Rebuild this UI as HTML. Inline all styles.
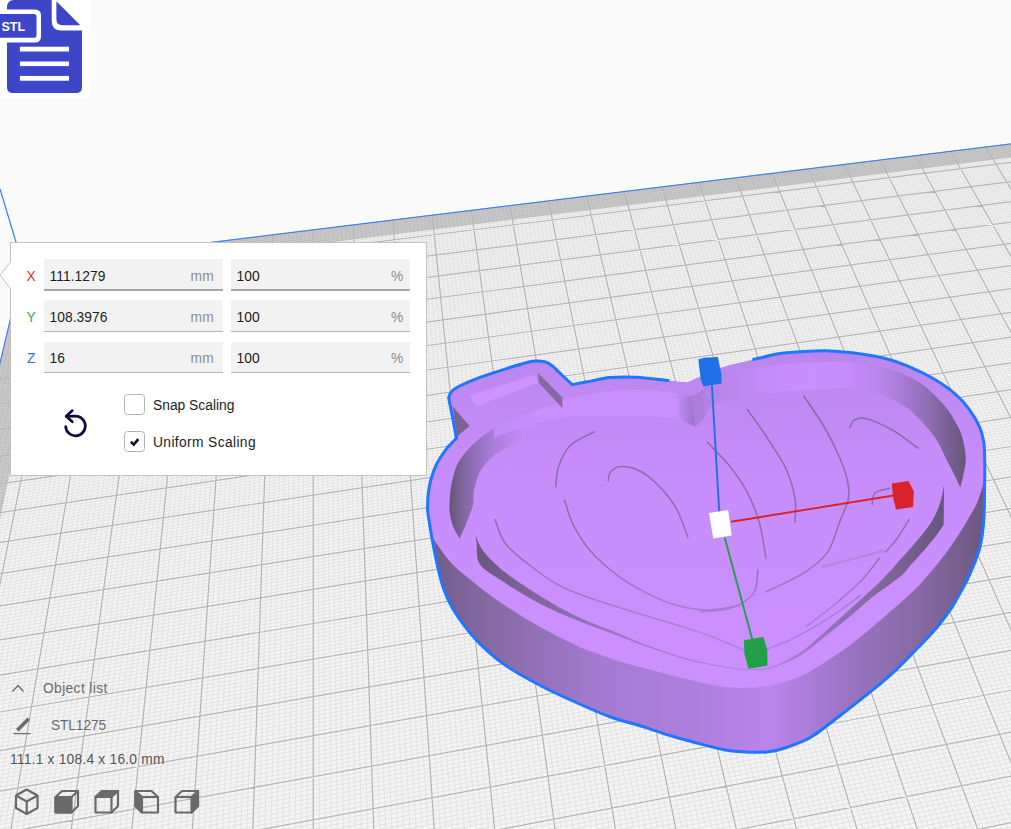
<!DOCTYPE html>
<html><head><meta charset="utf-8"><title>STL1275</title>
<style>
html,body{margin:0;padding:0}
body{width:1011px;height:829px;overflow:hidden;position:relative;background:#fafafa;font-family:"Liberation Sans",sans-serif}
.abs{position:absolute;left:0;top:0}
.t{position:absolute;white-space:nowrap;font-size:13.8px;line-height:16px;color:#1c1c1c;letter-spacing:0.37px}
.panel{position:absolute;left:10px;top:242px;width:415px;height:232px;background:#fff;border:1px solid #c2c2c2;box-sizing:content-box}
.f{position:absolute;width:179px;height:30px;background:#f2f2f2;border-bottom:1.5px solid #b4b4b4}
.f.h{border-bottom:2px solid #a6a6a6;height:30px}
.u{color:#8c8c8c}
.cb{position:absolute;left:124px;width:19px;height:19px;border:1.2px solid #b4b4b4;border-radius:3.5px;background:#fff}
.g{color:#6b6b6b}

</style></head><body>
<svg class="abs" width="1011" height="829" viewBox="0 0 1011 829">
<polygon points="23.1,265.6 1054.3,138.6 1512.2,817.0 -193.1,1179.1" fill="#f4f4f4"/>
<path d="M27.4,265.0L-185.5,1177.5M31.6,264.5L-177.9,1175.9M35.9,264.0L-170.3,1174.3M40.2,263.5L-162.7,1172.7M44.4,262.9L-155.1,1171.1M48.7,262.4L-147.6,1169.5M52.9,261.9L-140.0,1167.9M57.2,261.4L-132.5,1166.3M61.4,260.9L-125.0,1164.7M69.9,259.8L-110.0,1161.5M74.1,259.3L-102.5,1159.9M78.3,258.8L-95.0,1158.3M82.5,258.2L-87.5,1156.7M86.8,257.7L-80.1,1155.1M91.0,257.2L-72.6,1153.6M95.2,256.7L-65.2,1152.0M99.4,256.2L-57.8,1150.4M103.6,255.7L-50.3,1148.8M112.0,254.6L-35.6,1145.7M116.2,254.1L-28.2,1144.1M120.4,253.6L-20.8,1142.6M124.6,253.1L-13.5,1141.0M128.7,252.6L-6.1,1139.4M132.9,252.0L1.2,1137.9M137.1,251.5L8.5,1136.3M141.3,251.0L15.9,1134.8M145.4,250.5L23.2,1133.2M153.8,249.5L37.7,1130.1M157.9,249.0L45.0,1128.6M162.1,248.5L52.2,1127.0M166.2,247.9L59.5,1125.5M170.4,247.4L66.7,1124.0M174.5,246.9L74.0,1122.4M178.6,246.4L81.2,1120.9M182.8,245.9L88.4,1119.4M186.9,245.4L95.6,1117.8M195.2,244.4L109.9,1114.8M199.3,243.9L117.1,1113.3M203.4,243.4L124.2,1111.8M207.5,242.9L131.4,1110.2M211.6,242.4L138.5,1108.7M215.7,241.8L145.6,1107.2M219.8,241.3L152.7,1105.7M223.9,240.8L159.8,1104.2M228.0,240.3L166.9,1102.7M236.2,239.3L181.0,1099.7M240.3,238.8L188.1,1098.2M244.4,238.3L195.1,1096.7M248.4,237.8L202.2,1095.2M252.5,237.3L209.2,1093.7M256.6,236.8L216.2,1092.2M260.7,236.3L223.2,1090.7M264.7,235.8L230.2,1089.3M268.8,235.3L237.2,1087.8M276.9,234.3L251.1,1084.8M280.9,233.8L258.1,1083.3M285.0,233.3L265.0,1081.9M289.0,232.8L271.9,1080.4M293.1,232.3L278.9,1078.9M297.1,231.8L285.8,1077.5M301.1,231.3L292.7,1076.0M305.2,230.8L299.6,1074.5M309.2,230.3L306.5,1073.1M317.2,229.3L320.2,1070.1M321.3,228.8L327.0,1068.7M325.3,228.4L333.9,1067.2M329.3,227.9L340.7,1065.8M333.3,227.4L347.5,1064.3M337.3,226.9L354.3,1062.9M341.3,226.4L361.1,1061.5M345.3,225.9L367.9,1060.0M349.3,225.4L374.7,1058.6M357.3,224.4L388.3,1055.7M361.2,223.9L395.0,1054.3M365.2,223.4L401.8,1052.8M369.2,222.9L408.5,1051.4M373.2,222.5L415.2,1050.0M377.1,222.0L421.9,1048.5M381.1,221.5L428.6,1047.1M385.1,221.0L435.3,1045.7M389.0,220.5L442.0,1044.3M396.9,219.5L455.4,1041.4M400.9,219.0L462.0,1040.0M404.8,218.6L468.7,1038.6M408.8,218.1L475.3,1037.2M412.7,217.6L481.9,1035.8M416.6,217.1L488.5,1034.4M420.6,216.6L495.1,1033.0M424.5,216.1L501.7,1031.6M428.4,215.7L508.3,1030.2M436.3,214.7L521.5,1027.4M440.2,214.2L528.1,1026.0M444.1,213.7L534.6,1024.6M448.0,213.2L541.1,1023.2M451.9,212.8L547.7,1021.8M455.8,212.3L554.2,1020.5M459.7,211.8L560.7,1019.1M463.6,211.3L567.2,1017.7M467.5,210.8L573.7,1016.3M475.3,209.9L586.7,1013.6M479.1,209.4L593.2,1012.2M483.0,208.9L599.6,1010.8M486.9,208.4L606.1,1009.4M490.8,208.0L612.5,1008.1M494.6,207.5L619.0,1006.7M498.5,207.0L625.4,1005.3M502.4,206.5L631.8,1004.0M506.2,206.1L638.2,1002.6M513.9,205.1L651.0,999.9M517.8,204.6L657.4,998.6M521.6,204.2L663.7,997.2M525.5,203.7L670.1,995.8M529.3,203.2L676.4,994.5M533.2,202.8L682.8,993.2M537.0,202.3L689.1,991.8M540.8,201.8L695.5,990.5M544.7,201.3L701.8,989.1M552.3,200.4L714.4,986.4M556.1,199.9L720.7,985.1M559.9,199.5L727.0,983.8M563.7,199.0L733.2,982.4M567.6,198.5L739.5,981.1M571.4,198.0L745.7,979.8M575.2,197.6L752.0,978.5M579.0,197.1L758.2,977.1M582.8,196.6L764.5,975.8M590.3,195.7L776.9,973.2M594.1,195.2L783.1,971.9M597.9,194.8L789.3,970.5M601.7,194.3L795.5,969.2M605.5,193.8L801.7,967.9M609.2,193.4L807.8,966.6M613.0,192.9L814.0,965.3M616.8,192.5L820.1,964.0M620.5,192.0L826.3,962.7M628.1,191.1L838.6,960.1M631.8,190.6L844.7,958.8M635.6,190.1L850.8,957.5M639.3,189.7L856.9,956.2M643.1,189.2L863.0,954.9M646.8,188.8L869.1,953.6M650.6,188.3L875.1,952.3M654.3,187.8L881.2,951.0M658.0,187.4L887.3,949.7M665.5,186.5L899.4,947.2M669.2,186.0L905.4,945.9M672.9,185.5L911.4,944.6M676.7,185.1L917.5,943.3M680.4,184.6L923.5,942.0M684.1,184.2L929.5,940.8M687.8,183.7L935.5,939.5M691.5,183.3L941.4,938.2M695.2,182.8L947.4,937.0M702.6,181.9L959.4,934.4M706.3,181.4L965.3,933.2M710.0,181.0L971.3,931.9M713.7,180.5L977.2,930.6M717.4,180.1L983.1,929.4M721.0,179.6L989.1,928.1M724.7,179.2L995.0,926.9M728.4,178.7L1000.9,925.6M732.1,178.3L1006.8,924.4M739.4,177.4L1018.5,921.9M743.1,176.9L1024.4,920.6M746.7,176.4L1030.3,919.4M750.4,176.0L1036.1,918.1M754.1,175.5L1042.0,916.9M757.7,175.1L1047.8,915.6M761.4,174.6L1053.7,914.4M765.0,174.2L1059.5,913.2M768.6,173.8L1065.3,911.9M775.9,172.9L1076.9,909.5M779.6,172.4L1082.7,908.2M783.2,172.0L1088.5,907.0M786.8,171.5L1094.3,905.8M790.4,171.1L1100.1,904.5M794.1,170.6L1105.8,903.3M797.7,170.2L1111.6,902.1M801.3,169.7L1117.4,900.9M804.9,169.3L1123.1,899.7M812.1,168.4L1134.6,897.2M815.7,167.9L1140.3,896.0M819.4,167.5L1146.0,894.8M823.0,167.1L1151.7,893.6M826.5,166.6L1157.4,892.4M830.1,166.2L1163.1,891.2M833.7,165.7L1168.8,890.0M837.3,165.3L1174.4,888.8M840.9,164.9L1180.1,887.6M848.1,164.0L1191.4,885.2M851.6,163.5L1197.1,884.0M855.2,163.1L1202.7,882.8M858.8,162.6L1208.3,881.6M862.4,162.2L1213.9,880.4M865.9,161.8L1219.6,879.2M869.5,161.3L1225.2,878.0M873.0,160.9L1230.8,876.8M876.6,160.5L1236.4,875.6M883.7,159.6L1247.5,873.2M887.3,159.1L1253.1,872.1M890.8,158.7L1258.7,870.9M894.3,158.3L1264.2,869.7M897.9,157.8L1269.8,868.5M901.4,157.4L1275.3,867.3M905.0,157.0L1280.8,866.2M908.5,156.5L1286.4,865.0M912.0,156.1L1291.9,863.8M919.1,155.2L1302.9,861.5M922.6,154.8L1308.4,860.3M926.1,154.4L1313.9,859.1M929.6,153.9L1319.4,858.0M933.1,153.5L1324.9,856.8M936.6,153.1L1330.3,855.7M940.1,152.6L1335.8,854.5M943.6,152.2L1341.2,853.3M947.1,151.8L1346.7,852.2M954.1,150.9L1357.6,849.9M957.6,150.5L1363.0,848.7M961.1,150.0L1368.4,847.6M964.6,149.6L1373.8,846.4M968.1,149.2L1379.2,845.3M971.6,148.8L1384.6,844.1M975.1,148.3L1390.0,843.0M978.5,147.9L1395.4,841.8M982.0,147.5L1400.8,840.7M988.9,146.6L1411.5,838.4M992.4,146.2L1416.9,837.3M995.9,145.8L1422.2,836.1M999.3,145.3L1427.6,835.0M1002.8,144.9L1432.9,833.9M1006.2,144.5L1438.3,832.7M1009.7,144.1L1443.6,831.6M1013.1,143.6L1448.9,830.5M1016.6,143.2L1454.2,829.4M1023.5,142.4L1464.8,827.1M1026.9,141.9L1470.1,826.0M1030.3,141.5L1475.4,824.9M1033.8,141.1L1480.7,823.7M1037.2,140.7L1485.9,822.6M1040.6,140.3L1491.2,821.5M1044.0,139.8L1496.4,820.4M1047.5,139.4L1501.7,819.3M1050.9,139.0L1506.9,818.2M22.6,267.7L1055.4,140.3M22.1,269.8L1056.6,141.9M21.6,271.9L1057.7,143.6M21.1,274.0L1058.9,145.3M20.6,276.1L1060.0,147.0M20.1,278.3L1061.2,148.7M19.6,280.4L1062.3,150.4M19.1,282.5L1063.5,152.2M18.6,284.7L1064.6,153.9M17.5,289.0L1067.0,157.3M17.0,291.2L1068.1,159.1M16.5,293.4L1069.3,160.8M16.0,295.6L1070.5,162.6M15.5,297.8L1071.7,164.3M15.0,300.0L1072.9,166.1M14.4,302.2L1074.1,167.9M13.9,304.4L1075.3,169.6M13.4,306.7L1076.5,171.4M12.3,311.2L1078.9,175.0M11.8,313.4L1080.1,176.8M11.2,315.7L1081.3,178.6M10.7,318.0L1082.5,180.4M10.2,320.2L1083.7,182.2M9.6,322.5L1085.0,184.0M9.1,324.8L1086.2,185.8M8.5,327.1L1087.4,187.6M8.0,329.4L1088.7,189.5M6.9,334.1L1091.1,193.2M6.3,336.4L1092.4,195.0M5.8,338.8L1093.6,196.9M5.2,341.1L1094.9,198.7M4.7,343.5L1096.2,200.6M4.1,345.9L1097.4,202.5M3.5,348.3L1098.7,204.4M3.0,350.6L1100.0,206.2M2.4,353.0L1101.2,208.1M1.3,357.9L1103.8,211.9M0.7,360.3L1105.1,213.9M0.1,362.7L1106.4,215.8M-0.5,365.2L1107.7,217.7M-1.1,367.6L1109.0,219.6M-1.6,370.1L1110.3,221.6M-2.2,372.6L1111.6,223.5M-2.8,375.0L1112.9,225.5M-3.4,377.5L1114.3,227.4M-4.6,382.5L1116.9,231.4M-5.2,385.0L1118.2,233.3M-5.8,387.6L1119.6,235.3M-6.4,390.1L1120.9,237.3M-7.0,392.6L1122.3,239.3M-7.6,395.2L1123.6,241.3M-8.2,397.8L1125.0,243.3M-8.8,400.3L1126.3,245.3M-9.4,402.9L1127.7,247.4M-10.6,408.1L1130.5,251.4M-11.3,410.7L1131.8,253.5M-11.9,413.4L1133.2,255.5M-12.5,416.0L1134.6,257.6M-13.1,418.6L1136.0,259.6M-13.8,421.3L1137.4,261.7M-14.4,424.0L1138.8,263.8M-15.0,426.6L1140.2,265.9M-15.7,429.3L1141.6,268.0M-16.9,434.7L1144.5,272.2M-17.6,437.4L1145.9,274.3M-18.2,440.2L1147.3,276.4M-18.9,442.9L1148.8,278.5M-19.5,445.7L1150.2,280.7M-20.2,448.4L1151.6,282.8M-20.8,451.2L1153.1,285.0M-21.5,454.0L1154.5,287.1M-22.1,456.8L1156.0,289.3M-23.5,462.4L1158.9,293.6M-24.1,465.2L1160.4,295.8M-24.8,468.0L1161.9,298.0M-25.5,470.9L1163.4,300.2M-26.2,473.7L1164.9,302.4M-26.8,476.6L1166.4,304.7M-27.5,479.5L1167.9,306.9M-28.2,482.4L1169.4,309.1M-28.9,485.3L1170.9,311.4M-30.3,491.1L1174.0,315.9M-31.0,494.1L1175.5,318.1M-31.7,497.0L1177.0,320.4M-32.4,500.0L1178.6,322.7M-33.1,503.0L1180.1,325.0M-33.8,506.0L1181.7,327.3M-34.5,509.0L1183.2,329.6M-35.2,512.0L1184.8,331.9M-35.9,515.0L1186.3,334.2M-37.4,521.1L1189.5,338.9M-38.1,524.2L1191.1,341.3M-38.8,527.2L1192.7,343.6M-39.6,530.3L1194.3,346.0M-40.3,533.4L1195.9,348.4M-41.0,536.5L1197.5,350.7M-41.8,539.7L1199.1,353.1M-42.5,542.8L1200.7,355.5M-43.3,546.0L1202.3,358.0M-44.8,552.3L1205.6,362.8M-45.5,555.5L1207.3,365.2M-46.3,558.7L1208.9,367.7M-47.0,561.9L1210.6,370.1M-47.8,565.2L1212.2,372.6M-48.6,568.4L1213.9,375.1M-49.3,571.7L1215.6,377.6M-50.1,575.0L1217.3,380.0M-50.9,578.3L1218.9,382.5M-52.5,584.9L1222.3,387.6M-53.3,588.2L1224.1,390.1M-54.1,591.6L1225.8,392.6M-54.8,594.9L1227.5,395.2M-55.6,598.3L1229.2,397.8M-56.4,601.7L1230.9,400.3M-57.3,605.1L1232.7,402.9M-58.1,608.5L1234.4,405.5M-58.9,612.0L1236.2,408.1M-60.5,618.9L1239.7,413.3M-61.3,622.4L1241.5,415.9M-62.2,625.9L1243.3,418.6M-63.0,629.4L1245.0,421.2M-63.8,632.9L1246.8,423.9M-64.7,636.5L1248.6,426.5M-65.5,640.0L1250.4,429.2M-66.4,643.6L1252.3,431.9M-67.2,647.2L1254.1,434.6M-68.9,654.4L1257.7,440.0M-69.8,658.1L1259.6,442.8M-70.7,661.7L1261.4,445.5M-71.5,665.4L1263.3,448.3M-72.4,669.1L1265.2,451.0M-73.3,672.8L1267.0,453.8M-74.2,676.5L1268.9,456.6M-75.0,680.3L1270.8,459.4M-75.9,684.0L1272.7,462.2M-77.7,691.6L1276.5,467.8M-78.6,695.4L1278.4,470.7M-79.5,699.2L1280.3,473.5M-80.4,703.1L1282.3,476.4M-81.4,706.9L1284.2,479.3M-82.3,710.8L1286.2,482.1M-83.2,714.7L1288.1,485.0M-84.1,718.6L1290.1,487.9M-85.1,722.6L1292.0,490.9M-86.9,730.5L1296.0,496.7M-87.9,734.5L1298.0,499.7M-88.8,738.5L1300.0,502.7M-89.8,742.5L1302.0,505.6M-90.7,746.6L1304.0,508.6M-91.7,750.7L1306.1,511.6M-92.7,754.7L1308.1,514.7M-93.6,758.9L1310.1,517.7M-94.6,763.0L1312.2,520.7M-96.6,771.3L1316.3,526.9M-97.6,775.5L1318.4,529.9M-98.6,779.7L1320.5,533.0M-99.6,783.9L1322.6,536.1M-100.6,788.2L1324.7,539.2M-101.6,792.4L1326.8,542.4M-102.6,796.7L1328.9,545.5M-103.6,801.0L1331.1,548.7M-104.7,805.4L1333.2,551.9M-106.7,814.1L1337.5,558.2M-107.8,818.5L1339.7,561.4M-108.8,822.9L1341.9,564.7M-109.9,827.4L1344.0,567.9M-110.9,831.8L1346.2,571.2M-112.0,836.3L1348.4,574.4M-113.0,840.8L1350.7,577.7M-114.1,845.4L1352.9,581.0M-115.2,849.9L1355.1,584.3M-117.4,859.1L1359.6,591.0M-118.5,863.7L1361.9,594.3M-119.6,868.4L1364.1,597.7M-120.7,873.0L1366.4,601.1M-121.8,877.7L1368.7,604.5M-122.9,882.5L1371.0,607.9M-124.0,887.2L1373.3,611.3M-125.1,892.0L1375.6,614.7M-126.3,896.8L1378.0,618.2M-128.6,906.4L1382.7,625.1M-129.7,911.3L1385.0,628.7M-130.9,916.2L1387.4,632.2M-132.0,921.1L1389.8,635.7M-133.2,926.1L1392.2,639.2M-134.4,931.0L1394.6,642.8M-135.6,936.0L1397.0,646.4M-136.8,941.1L1399.4,650.0M-138.0,946.1L1401.9,653.6M-140.4,956.3L1406.8,660.9M-141.6,961.4L1409.2,664.5M-142.8,966.6L1411.7,668.2M-144.0,971.8L1414.2,671.9M-145.3,977.0L1416.7,675.6M-146.5,982.2L1419.2,679.3M-147.8,987.5L1421.8,683.1M-149.0,992.8L1424.3,686.8M-150.3,998.1L1426.9,690.6M-152.8,1008.9L1432.0,698.2M-154.1,1014.3L1434.6,702.1M-155.4,1019.7L1437.2,705.9M-156.7,1025.2L1439.8,709.8M-158.0,1030.7L1442.4,713.7M-159.3,1036.3L1445.0,717.6M-160.6,1041.8L1447.7,721.5M-161.9,1047.4L1450.3,725.4M-163.3,1053.1L1453.0,729.4M-166.0,1064.4L1458.4,737.4M-167.3,1070.2L1461.1,741.4M-168.7,1075.9L1463.8,745.4M-170.1,1081.7L1466.6,749.5M-171.4,1087.6L1469.3,753.5M-172.8,1093.4L1472.1,757.6M-174.2,1099.3L1474.9,761.7M-175.6,1105.2L1477.6,765.9M-177.0,1111.2L1480.4,770.0M-179.9,1123.2L1486.1,778.4M-181.3,1129.3L1488.9,782.6M-182.8,1135.4L1491.8,786.8M-184.2,1141.5L1494.7,791.1M-185.7,1147.7L1497.5,795.4M-187.1,1153.9L1500.4,799.7M-188.6,1160.2L1503.3,804.0M-190.1,1166.5L1506.3,808.3M-191.6,1172.8L1509.2,812.7" stroke="#e0e0e0" stroke-width="0.85" fill="none"/>
<polygon points="23.1,265.6 1054.3,138.6 1062.8,151.1 19.4,281.3" fill="#000" fill-opacity="0.16"/>
<polygon points="23.1,265.6 54.6,261.7 -137.0,1167.2 -193.1,1179.1" fill="#000" fill-opacity="0.16"/>
<path d="M23.1,265.6L-193.1,1179.1M65.6,260.3L-117.5,1163.1M107.8,255.1L-42.9,1147.3M149.6,250.0L30.4,1131.7M191.0,244.9L102.7,1116.3M232.1,239.8L174.0,1101.2M272.8,234.8L244.2,1086.3M313.2,229.8L313.3,1071.6M353.3,224.9L381.5,1057.1M393.0,220.0L448.7,1042.9M432.3,215.2L514.9,1028.8M471.4,210.4L580.2,1014.9M510.1,205.6L644.6,1001.3M548.5,200.9L708.1,987.8M586.6,196.2L770.7,974.5M624.3,191.5L832.4,961.4M661.8,186.9L893.3,948.4M698.9,182.3L953.4,935.7M735.7,177.8L1012.7,923.1M772.3,173.3L1071.1,910.7M808.5,168.8L1128.8,898.4M844.5,164.4L1185.8,886.4M880.2,160.0L1241.9,874.4M915.5,155.7L1297.4,862.6M950.6,151.3L1352.1,851.0M985.5,147.0L1406.2,839.6M1020.0,142.8L1459.5,828.2M1054.3,138.6L1512.2,817.0M23.1,265.6L1054.3,138.6M18.1,286.9L1065.8,155.6M12.8,308.9L1077.7,173.2M7.4,331.8L1089.9,191.3M1.8,355.4L1102.5,210.0M-4.0,380.0L1115.6,229.4M-10.0,405.5L1129.1,249.4M-16.3,432.0L1143.0,270.1M-22.8,459.6L1157.5,291.5M-29.6,488.2L1172.4,313.6M-36.7,518.0L1187.9,336.6M-44.0,549.1L1204.0,360.4M-51.7,581.6L1220.6,385.1M-59.7,615.4L1237.9,410.7M-68.1,650.8L1255.9,437.3M-76.8,687.8L1274.6,465.0M-86.0,726.5L1294.0,493.8M-95.6,767.1L1314.3,523.8M-105.7,809.7L1335.4,555.0M-116.3,854.5L1357.4,587.6M-127.4,901.6L1380.3,621.7M-139.2,951.2L1404.3,657.2M-151.5,1003.5L1429.4,694.4M-164.6,1058.7L1455.7,733.4M-178.4,1117.2L1483.3,774.2M-193.1,1179.1L1512.2,817.0" stroke="#b4b4b4" stroke-width="1.2" fill="none"/>
<path d="M-193.1,1179.1L23.1,265.6L1054.3,138.6" stroke="#2f7df5" stroke-width="1" fill="none"/>
<path d="M23.1,265.6L0,189" stroke="#2f7df5" stroke-width="1.2" fill="none"/>
</svg>
<svg class="abs" width="1011" height="829" viewBox="0 0 1011 829">
<defs>
<linearGradient id="gw" gradientUnits="userSpaceOnUse" x1="427" y1="0" x2="985" y2="0">
<stop offset="0" stop-color="#6f5b87"/><stop offset="0.095" stop-color="#83689f"/><stop offset="0.31" stop-color="#a37bd0"/><stop offset="0.49" stop-color="#ae7fde"/><stop offset="0.615" stop-color="#b985ec"/><stop offset="0.76" stop-color="#9a74c2"/><stop offset="0.9" stop-color="#82689e"/><stop offset="1" stop-color="#6a5880"/>
</linearGradient>
<linearGradient id="gw2" gradientUnits="userSpaceOnUse" x1="470" y1="0" x2="946" y2="0">
<stop offset="0" stop-color="#66567b"/><stop offset="0.1" stop-color="#7a6294"/><stop offset="0.3" stop-color="#9a76c4"/><stop offset="0.5" stop-color="#b081de"/><stop offset="0.62" stop-color="#b583e6"/><stop offset="0.75" stop-color="#9572bc"/><stop offset="0.9" stop-color="#7a6394"/><stop offset="1" stop-color="#65567a"/>
</linearGradient>
<linearGradient id="gv" gradientUnits="userSpaceOnUse" x1="677" y1="0" x2="694" y2="0"><stop offset="0" stop-color="#c58cfa"/><stop offset="1" stop-color="#9e75c6"/></linearGradient>
<linearGradient id="glc" gradientUnits="userSpaceOnUse" x1="449" y1="0" x2="524" y2="0">
<stop offset="0" stop-color="#645578"/><stop offset="0.24" stop-color="#866aa8"/><stop offset="0.47" stop-color="#9f77ca"/><stop offset="0.6" stop-color="#aa7dd9"/><stop offset="0.8" stop-color="#b785e9"/><stop offset="1" stop-color="#c48bf8"/>
</linearGradient>
<linearGradient id="gg" gradientUnits="userSpaceOnUse" x1="0" y1="400" x2="0" y2="680">
<stop offset="0" stop-color="#7a6396"/><stop offset="0.55" stop-color="#84699f"/><stop offset="0.75" stop-color="#9f79ca"/><stop offset="1" stop-color="#b384e4"/>
</linearGradient>
<linearGradient id="gb" gradientUnits="userSpaceOnUse" x1="0" y1="350" x2="0" y2="650">
<stop offset="0" stop-color="#ba85ed"/><stop offset="0.17" stop-color="#c089f3"/><stop offset="0.35" stop-color="#c68cfa"/><stop offset="0.6" stop-color="#c98efd"/><stop offset="1" stop-color="#cb8ffe"/>
</linearGradient>
<linearGradient id="gl" gradientUnits="userSpaceOnUse" x1="449" y1="0" x2="680" y2="0">
<stop offset="0" stop-color="#c48cf8"/><stop offset="0.195" stop-color="#c48cf8"/><stop offset="0.4" stop-color="#ca8ffe"/><stop offset="1" stop-color="#ca8ffe"/>
</linearGradient>
<linearGradient id="gr" gradientUnits="userSpaceOnUse" x1="705" y1="0" x2="966" y2="0">
<stop offset="0" stop-color="#b282e4"/><stop offset="0.1" stop-color="#bb87ee"/><stop offset="0.25" stop-color="#c58cfa"/><stop offset="0.42" stop-color="#ca8ffe"/><stop offset="0.55" stop-color="#c68cfa"/><stop offset="0.7" stop-color="#b583e6"/><stop offset="0.85" stop-color="#8f6fb4"/><stop offset="1" stop-color="#65567a"/>
</linearGradient>
</defs>
<path d="M427.5,509.0C427.6,506.4 427.7,498.3 428.3,493.4C428.9,488.5 429.5,484.4 430.9,479.5C432.3,474.6 434.3,468.6 436.8,463.7C439.3,458.8 442.4,454.1 445.7,449.8C449.0,445.5 454.8,440.0 456.6,438.0L456.6,438.0C456.3,436.4 455.6,433.1 454.6,428.1C453.6,423.2 451.7,413.4 450.7,408.3C449.7,403.2 449.0,399.2 448.7,397.4L448.7,397.4C449.2,396.4 450.0,393.3 451.7,391.5C453.4,389.7 454.0,388.8 458.6,386.5C463.2,384.2 470.9,380.7 479.3,377.6C487.7,374.5 500.8,370.4 509.0,367.8C517.2,365.2 524.2,363.1 528.8,362.0C533.4,360.9 533.9,361.0 536.7,361.0C539.5,361.0 543.0,361.2 545.6,362.0C548.2,362.8 549.7,363.8 552.5,366.0C555.3,368.2 559.1,372.4 562.4,375.5C565.7,378.6 570.6,383.1 572.3,384.6L572.3,384.6C574.9,384.1 581.9,382.8 588.2,381.6C594.5,380.4 602.1,378.3 610.0,377.6C617.9,376.9 625.8,376.7 635.7,377.2C645.6,377.7 660.7,379.7 669.3,380.6C677.9,381.5 684.2,382.2 687.2,382.5L687.2,382.5C692.8,380.0 709.9,371.5 720.8,367.7C731.7,363.9 742.8,362.1 752.4,359.8C762.0,357.5 770.3,355.2 778.2,353.8C786.1,352.4 792.2,352.2 800.0,351.7C807.8,351.2 816.3,350.5 825.0,350.7C833.7,350.9 842.5,351.5 852.2,352.7C862.0,353.9 874.1,355.7 883.5,358.0C892.9,360.3 900.1,362.8 908.5,366.3C916.9,369.8 925.9,374.3 933.6,378.8C941.3,383.3 948.6,388.3 954.5,393.4C960.4,398.4 964.9,403.5 969.1,409.1C973.3,414.7 977.1,421.4 979.5,426.8C981.9,432.2 982.8,435.9 983.7,441.5C984.6,447.1 984.5,453.8 984.7,460.2C984.9,466.6 984.7,476.7 984.7,480.0L984.7,480.0C984.5,486.9 984.6,510.2 983.7,521.7C982.8,533.2 981.9,539.9 979.5,548.9C977.1,557.9 972.4,568.6 969.1,576.0C965.9,583.4 962.9,588.0 960.0,593.2C957.1,598.5 955.6,602.0 951.9,607.5C948.2,613.0 943.2,619.9 937.7,626.5C932.2,633.1 925.8,639.6 918.7,647.0C911.6,654.4 902.6,663.6 895.0,670.8C887.4,677.9 881.6,682.7 872.8,689.9C864.0,697.1 852.2,706.3 842.4,713.9C832.6,721.5 821.0,730.5 813.9,735.3C806.8,740.0 805.2,740.2 800.0,742.4C794.8,744.6 788.0,747.1 782.4,748.7C776.8,750.3 772.9,751.4 766.6,751.9C760.3,752.4 751.0,752.2 744.4,751.9C737.8,751.6 733.9,751.5 727.0,750.3C720.1,749.1 712.5,747.1 703.3,744.7C694.1,742.3 682.2,739.2 671.7,736.0C661.2,732.8 650.2,728.9 640.0,725.7C629.8,722.5 621.4,721.0 610.6,717.0C599.8,713.0 586.9,707.3 575.0,702.0C563.1,696.7 551.2,691.3 539.3,685.0C527.4,678.7 513.6,671.0 503.7,664.1C493.8,657.2 486.7,650.5 480.0,643.9C473.3,637.3 468.2,630.8 463.5,624.6C458.8,618.4 455.0,612.7 451.7,606.8C448.4,600.9 446.0,595.6 443.7,589.0C441.4,582.4 439.6,574.9 437.8,567.3C436.0,559.7 434.4,551.4 432.9,543.5C431.4,535.6 429.8,525.5 428.9,519.8C428.0,514.0 427.7,510.8 427.5,509.0Z" fill="url(#gb)"/>
<path d="M431.0,534.0C431.5,534.9 430.7,535.1 433.8,539.6C436.9,544.1 443.8,554.7 449.7,561.3C455.6,567.9 461.8,572.7 469.5,579.1C477.2,585.5 485.4,592.2 496.0,599.5C506.6,606.8 519.6,615.3 533.0,623.0C546.4,630.7 565.3,640.2 576.5,645.5C587.7,650.8 592.8,651.8 600.0,654.5C607.2,657.2 613.3,659.4 620.0,661.5C626.7,663.6 631.4,664.7 640.0,667.0C648.6,669.3 661.2,672.8 671.7,675.5C682.2,678.2 694.1,681.1 703.3,683.0C712.5,684.9 719.1,686.2 727.0,687.0C734.9,687.8 742.9,688.2 750.8,687.8C758.7,687.4 766.3,686.5 774.5,684.6C782.7,682.7 791.8,680.1 800.0,676.5C808.2,672.9 815.8,667.8 823.7,662.9C831.6,658.0 839.6,652.8 847.5,647.0C855.4,641.2 863.3,634.6 871.2,628.0C879.1,621.4 890.2,611.6 895.0,607.5C899.8,603.4 896.5,606.3 900.0,603.2C903.5,600.1 911.1,593.4 915.7,588.8C920.3,584.2 923.7,580.1 927.7,575.5C931.7,570.9 936.0,565.8 939.8,561.0C943.6,556.2 947.3,551.3 950.7,546.5C954.1,541.7 957.5,536.5 960.3,532.1C963.1,527.7 964.8,524.9 967.6,520.0C970.4,515.1 974.5,508.7 977.0,503.0C979.5,497.3 981.3,490.5 982.6,486.0C983.9,481.5 984.4,477.7 984.7,476.0L984.7,476.0C984.7,476.7 984.9,472.4 984.7,480.0C984.5,487.6 984.6,510.2 983.7,521.7C982.8,533.2 981.9,539.9 979.5,548.9C977.1,557.9 972.4,568.6 969.1,576.0C965.9,583.4 962.9,588.0 960.0,593.2C957.1,598.5 955.6,602.0 951.9,607.5C948.2,613.0 943.2,619.9 937.7,626.5C932.2,633.1 925.8,639.6 918.7,647.0C911.6,654.4 902.6,663.6 895.0,670.8C887.4,677.9 881.6,682.7 872.8,689.9C864.0,697.1 852.2,706.3 842.4,713.9C832.6,721.5 821.0,730.5 813.9,735.3C806.8,740.0 805.2,740.2 800.0,742.4C794.8,744.6 788.0,747.1 782.4,748.7C776.8,750.3 772.9,751.4 766.6,751.9C760.3,752.4 751.0,752.2 744.4,751.9C737.8,751.6 733.9,751.5 727.0,750.3C720.1,749.1 712.5,747.1 703.3,744.7C694.1,742.3 682.2,739.2 671.7,736.0C661.2,732.8 650.2,728.9 640.0,725.7C629.8,722.5 621.4,721.0 610.6,717.0C599.8,713.0 586.9,707.3 575.0,702.0C563.1,696.7 551.2,691.3 539.3,685.0C527.4,678.7 513.6,671.0 503.7,664.1C493.8,657.2 486.7,650.5 480.0,643.9C473.3,637.3 468.2,630.8 463.5,624.6C458.8,618.4 455.0,612.7 451.7,606.8C448.4,600.9 446.0,595.6 443.7,589.0C441.4,582.4 439.6,574.9 437.8,567.3C436.0,559.7 433.7,547.5 432.9,543.5Z" fill="url(#gw)"/>
<path d="M459.6,538.6C458.5,536.5 454.6,530.4 453.0,526.0C451.4,521.6 450.2,516.3 449.7,512.0C449.1,507.7 449.4,504.8 449.7,500.0C450.0,495.2 450.4,489.6 451.7,483.5C453.0,477.4 454.6,469.6 457.6,463.7C460.6,457.8 464.9,452.8 469.5,447.9C474.1,442.9 481.2,437.3 485.3,434.0C489.4,430.7 489.1,430.6 494.2,428.0C499.2,425.4 508.1,421.8 515.6,418.7C523.1,415.6 531.6,412.2 539.3,409.2C547.0,406.2 556.0,402.9 562.0,400.9C568.0,398.9 566.9,398.9 575.0,397.3C583.1,395.7 598.7,392.6 610.6,391.4C622.5,390.2 635.1,389.9 646.2,390.2C657.3,390.5 672.1,392.9 677.3,393.4L679.2,419.1C673.7,418.6 659.6,416.8 646.2,416.3C632.8,415.8 612.6,416.1 598.7,416.3C584.8,416.5 574.9,415.9 563.0,417.5C551.1,419.1 539.0,422.4 527.5,425.8C516.0,429.2 502.2,433.0 494.2,438.0C486.2,443.0 482.8,448.2 479.3,455.8C475.8,463.4 474.5,476.1 473.4,483.5C472.2,490.9 472.6,495.9 472.4,500.0C472.2,504.1 473.5,504.0 472.4,508.0C471.3,512.0 468.1,518.9 466.0,524.0C463.9,529.1 460.7,536.2 459.6,538.6Z" fill="url(#gl)"/>
<path d="M459.6,538.6C458.5,536.5 454.6,530.4 453.0,526.0C451.4,521.6 450.2,516.3 449.7,512.0C449.1,507.7 449.4,504.8 449.7,500.0C450.0,495.2 450.4,489.6 451.7,483.5C453.0,477.4 454.6,469.6 457.6,463.7C460.6,457.8 464.9,452.8 469.5,447.9C474.1,442.9 481.2,437.3 485.3,434.0C489.4,430.7 492.7,429.0 494.2,428.0L494.2,438L494.2,438.0C496.8,436.9 504.4,433.5 510.0,431.5C515.5,429.5 522.8,427.2 527.5,425.8C532.2,424.4 536.2,423.5 538.0,423.0L538.0,423.0C534.9,426.0 526.5,436.0 519.5,441.1C512.5,446.2 502.4,448.9 495.9,453.8C489.4,458.7 484.4,464.4 480.7,470.6C477.0,476.8 475.2,485.3 473.9,490.9C472.6,496.5 474.4,498.9 473.1,504.4C471.8,509.9 468.2,518.3 466.0,524.0C463.8,529.7 460.7,536.2 459.6,538.6Z" fill="url(#glc)"/>
<path d="M703.0,389.5C706.0,386.9 712.6,377.5 720.8,374.0C729.0,370.5 742.9,370.0 752.4,368.5C761.9,367.0 770.1,365.9 778.0,365.0C785.9,364.1 792.2,363.5 800.0,363.0C807.8,362.5 816.7,362.1 825.0,362.0C833.3,361.9 839.8,361.5 850.0,362.5C860.2,363.5 877.0,365.9 886.2,368.0C895.4,370.1 899.0,372.3 905.0,375.0C911.0,377.7 917.1,380.8 922.3,384.4C927.5,388.0 931.8,392.3 936.0,396.5C940.2,400.7 944.4,405.3 947.7,409.7C951.0,414.1 953.6,418.5 956.0,423.0C958.4,427.5 960.5,430.9 962.1,436.8C963.7,442.7 965.6,451.9 965.8,458.5C965.9,465.1 963.9,471.8 963.0,476.6C962.1,481.4 960.8,485.7 960.3,487.5L960.3,487.5C959.3,485.4 956.6,479.2 954.5,475.0C952.4,470.8 950.7,467.9 947.7,462.1C944.8,456.3 941.0,447.0 936.8,440.4C932.6,433.8 927.7,428.0 922.3,422.3C916.9,416.6 911.8,410.9 904.3,406.1C896.8,401.3 886.1,396.3 877.1,393.4C868.1,390.5 858.7,389.6 850.0,388.9C841.3,388.2 833.3,389.0 825.0,389.2C816.7,389.4 807.8,389.8 800.0,390.3C792.2,390.8 786.6,390.8 778.0,392.0C769.4,393.2 759.4,395.2 748.5,397.4C737.6,399.6 720.1,402.0 712.9,405.3C705.6,408.6 706.3,415.2 705.0,417.2Z" fill="url(#gr)"/>
<path d="M452.6,406.3L469.5,426.1L456.6,437.0Z" fill="#7a6292"/>
<path d="M469.5,395.4L534.7,374.7L538.7,382.6L476.4,406.3Z" fill="#cd93ff"/>
<path d="M537.7,372.7L562.4,397.4L562.4,408.3L538.7,382.6Z" fill="#8669a3"/>
<path d="M677.3,393.4L692.1,396.4L695.1,427.0L679.2,419.1Z" fill="url(#gv)"/>
<path d="M692.1,396.4L703.0,389.5L705.0,417.2L695.1,427.0Z" fill="#ac7eda"/>
<path d="M473.4,525.7C473.9,528.3 475.5,535.2 476.5,541.5C477.5,547.8 475.5,557.0 479.3,563.3C483.1,569.6 489.2,572.5 499.1,579.1C509.0,585.7 525.5,596.0 538.7,602.9C551.9,609.8 564.8,615.1 578.3,620.7C591.8,626.3 609.7,632.6 620.0,636.5C630.3,640.4 628.8,640.3 640.0,644.2C651.2,648.1 673.0,656.0 687.5,660.0C702.0,664.0 717.6,666.3 727.0,668.0C736.4,669.7 736.9,669.9 744.0,670.0C751.1,670.1 760.5,671.2 769.8,668.8C779.1,666.4 791.0,660.9 800.0,655.7C809.0,650.5 815.8,643.7 823.7,637.5C831.6,631.3 839.6,625.2 847.5,618.6C855.4,612.0 862.5,605.0 871.2,598.0C880.0,591.0 893.2,582.5 900.0,576.7C906.8,570.9 908.1,567.8 912.1,563.4C916.1,559.0 920.1,554.8 924.1,550.2C928.1,545.6 932.9,539.9 936.2,535.7C939.5,531.5 942.5,526.6 943.7,524.8L944,485.5L944.0,485.5C943.4,488.4 942.1,497.1 940.2,502.8C938.3,508.6 935.3,515.1 932.6,520.0C929.9,524.9 927.5,527.7 924.1,532.1C920.7,536.5 916.1,541.9 912.1,546.5C908.1,551.1 903.9,555.4 900.0,559.8C896.1,564.2 893.4,567.7 888.6,572.7C883.8,577.8 878.1,583.6 871.2,590.1C864.4,596.6 855.4,604.5 847.5,611.6C839.6,618.8 831.6,626.2 823.7,633.0C815.8,639.8 809.0,646.8 800.0,652.5C791.0,658.2 779.1,664.6 769.8,667.3C760.5,670.0 751.1,668.9 744.0,668.8C736.9,668.7 736.4,668.5 727.0,666.8C717.6,665.1 702.0,662.7 687.5,658.6C673.0,654.5 651.2,646.5 640.0,642.4C628.8,638.3 630.3,638.2 620.0,634.0C609.7,629.8 590.2,622.5 578.3,617.0C566.4,611.5 560.1,608.0 548.6,601.0C537.1,594.0 519.5,583.1 509.0,575.2C498.4,567.3 490.7,559.6 485.3,553.4C479.9,547.2 478.5,542.6 476.5,538.0C474.5,533.4 473.9,527.8 473.4,525.7Z" fill="url(#gw2)"/>
<path d="M495.0,519.5C496.7,523.4 499.5,535.6 505.0,543.0C510.5,550.4 519.0,557.0 528.0,564.0C537.0,571.0 548.4,579.5 558.7,585.2C569.0,590.9 579.9,594.3 590.0,598.0C600.1,601.7 609.3,604.3 619.3,607.5C629.3,610.7 640.1,614.0 650.0,617.0C659.9,620.0 668.7,622.3 678.7,625.5C688.7,628.7 699.1,631.9 710.0,636.0C720.9,640.1 738.3,647.7 744.0,650.0" fill="none" stroke="url(#gg)" stroke-opacity="0.85" stroke-width="1.5" stroke-linecap="round"/>
<path d="M564.6,500.2C566.1,504.4 569.0,516.8 573.5,525.4C578.0,534.0 583.9,543.7 591.3,552.1C598.7,560.5 608.6,568.9 618.0,575.8C627.4,582.7 637.8,588.6 647.7,593.6C657.6,598.6 667.5,602.8 677.4,605.5C687.3,608.2 696.6,610.0 707.0,610.0C717.4,610.0 734.5,606.2 740.0,605.5" fill="none" stroke="url(#gg)" stroke-opacity="0.85" stroke-width="1.5" stroke-linecap="round"/>
<path d="M555.7,486.8C556.2,483.4 556.2,473.0 558.7,466.1C561.2,459.2 564.6,451.0 570.5,445.3C576.4,439.6 590.3,434.1 594.3,431.9" fill="none" stroke="url(#gg)" stroke-opacity="0.85" stroke-width="1.5" stroke-linecap="round"/>
<path d="M608.2,480.9C608.6,479.4 608.5,474.4 610.6,472.0C612.7,469.6 615.8,466.6 621.0,466.6C626.2,466.6 634.9,468.1 641.8,472.0C648.7,475.9 656.6,483.4 662.5,489.8C668.4,496.2 673.2,502.6 677.4,510.5C681.6,518.4 686.1,532.8 687.8,537.3" fill="none" stroke="url(#gg)" stroke-opacity="0.85" stroke-width="1.5" stroke-linecap="round"/>
<path d="M747.5,409.7C751.0,414.6 761.8,429.4 768.2,439.3C774.6,449.2 781.6,459.1 786.1,469.0C790.6,478.9 793.5,489.8 795.0,498.7C796.5,507.6 795.0,518.4 795.0,522.4" fill="none" stroke="url(#gg)" stroke-opacity="0.85" stroke-width="1.5" stroke-linecap="round"/>
<path d="M803.9,396.3C807.4,401.5 818.7,417.4 824.6,427.5C830.5,437.6 835.7,448.3 839.5,457.2C843.3,466.1 846.0,474.0 847.5,480.9C849.0,487.8 849.7,491.8 848.4,498.7C847.1,505.6 843.0,513.5 839.5,522.4C836.0,531.3 833.5,543.7 827.6,552.1C821.7,560.5 814.3,566.2 803.9,572.9C793.5,579.6 771.7,589.0 765.3,592.2" fill="none" stroke="url(#gg)" stroke-opacity="0.85" stroke-width="1.5" stroke-linecap="round"/>
<path d="M707.4,442.3C711.1,446.3 723.0,457.7 729.7,466.1C736.4,474.5 742.6,483.4 747.5,492.8C752.4,502.2 756.2,511.5 759.3,522.4C762.4,533.3 764.8,552.1 765.9,558.0" fill="none" stroke="url(#gg)" stroke-opacity="0.85" stroke-width="1.5" stroke-linecap="round"/>
<path d="M757.9,569.9C757.1,573.9 758.1,587.2 753.4,593.6C748.7,600.0 738.6,605.5 729.7,608.5C720.8,611.5 705.0,611.0 700.0,611.5" fill="none" stroke="url(#gg)" stroke-opacity="0.85" stroke-width="1.5" stroke-linecap="round"/>
<path d="M849.9,427.5C850.6,426.3 851.6,421.6 854.3,420.1C857.0,418.6 859.8,416.9 866.2,418.6C872.6,420.3 884.2,425.5 892.9,430.4C901.5,435.3 913.9,445.2 918.1,448.2" fill="none" stroke="url(#gg)" stroke-opacity="0.85" stroke-width="1.5" stroke-linecap="round"/>
<path d="M872.1,504.6C872.6,502.6 872.1,495.5 875.1,492.8C878.1,490.1 887.4,489.1 889.9,488.3" fill="none" stroke="url(#gg)" stroke-opacity="0.85" stroke-width="1.5" stroke-linecap="round"/>
<path d="M909.2,519.5C907.0,523.0 899.8,534.8 895.8,540.2C891.8,545.6 887.2,550.1 885.5,552.1" fill="none" stroke="url(#gg)" stroke-opacity="0.85" stroke-width="1.5" stroke-linecap="round"/>
<path d="M879.5,558.0C876.3,562.0 867.9,573.9 860.2,581.8C852.5,589.7 842.4,598.1 833.5,605.5C824.6,612.9 811.2,622.6 806.8,626.0" fill="none" stroke="url(#gg)" stroke-opacity="0.85" stroke-width="1.5" stroke-linecap="round"/>
<path d="M767.7,649.0C771.4,647.5 782.6,643.5 790.0,640.0C797.4,636.5 804.2,632.9 812.2,628.2C820.2,623.5 830.0,617.4 838.0,612.0C846.0,606.6 856.3,598.3 860.0,595.6" fill="none" stroke="url(#gg)" stroke-opacity="0.85" stroke-width="1.5" stroke-linecap="round"/>
<path d="M821.7,567L884,550.6" stroke="#b487e0" stroke-width="2.5" fill="none"/>
<path d="M984.7,480.0C984.5,486.9 984.6,510.2 983.7,521.7C982.8,533.2 981.9,539.9 979.5,548.9C977.1,557.9 972.4,568.6 969.1,576.0C965.9,583.4 962.9,588.0 960.0,593.2C957.1,598.5 955.6,602.0 951.9,607.5C948.2,613.0 943.2,619.9 937.7,626.5C932.2,633.1 925.8,639.6 918.7,647.0C911.6,654.4 902.6,663.6 895.0,670.8C887.4,677.9 881.6,682.7 872.8,689.9C864.0,697.1 852.2,706.3 842.4,713.9C832.6,721.5 821.0,730.5 813.9,735.3C806.8,740.0 805.2,740.2 800.0,742.4C794.8,744.6 788.0,747.1 782.4,748.7C776.8,750.3 772.9,751.4 766.6,751.9C760.3,752.4 751.0,752.2 744.4,751.9C737.8,751.6 733.9,751.5 727.0,750.3C720.1,749.1 712.5,747.1 703.3,744.7C694.1,742.3 682.2,739.2 671.7,736.0C661.2,732.8 650.2,728.9 640.0,725.7C629.8,722.5 621.4,721.0 610.6,717.0C599.8,713.0 586.9,707.3 575.0,702.0C563.1,696.7 551.2,691.3 539.3,685.0C527.4,678.7 513.6,671.0 503.7,664.1C493.8,657.2 486.7,650.5 480.0,643.9C473.3,637.3 468.2,630.8 463.5,624.6C458.8,618.4 455.0,612.7 451.7,606.8C448.4,600.9 446.0,595.6 443.7,589.0C441.4,582.4 439.6,574.9 437.8,567.3C436.0,559.7 434.4,551.4 432.9,543.5C431.4,535.6 429.8,525.5 428.9,519.8C428.0,514.0 427.7,510.8 427.5,509.0L427.5,509.0C427.6,506.4 427.7,498.3 428.3,493.4C428.9,488.5 429.5,484.4 430.9,479.5C432.3,474.6 434.3,468.6 436.8,463.7C439.3,458.8 442.4,454.1 445.7,449.8C449.0,445.5 454.8,440.0 456.6,438.0L456.6,438.0C456.3,436.4 455.6,433.1 454.6,428.1C453.6,423.2 451.7,413.4 450.7,408.3C449.7,403.2 449.0,399.2 448.7,397.4L448.7,397.4C449.2,396.4 450.0,393.3 451.7,391.5C453.4,389.7 454.0,388.8 458.6,386.5C463.2,384.2 470.9,380.7 479.3,377.6C487.7,374.5 500.8,370.4 509.0,367.8C517.2,365.2 524.2,363.1 528.8,362.0C533.4,360.9 533.9,361.0 536.7,361.0C539.5,361.0 543.0,361.2 545.6,362.0C548.2,362.8 549.7,363.8 552.5,366.0C555.3,368.2 559.1,372.4 562.4,375.5C565.7,378.6 570.6,383.1 572.3,384.6L572.3,384.6C574.9,384.1 581.9,382.8 588.2,381.6C594.5,380.4 602.1,378.3 610.0,377.6C617.9,376.9 625.8,376.7 635.7,377.2C645.6,377.7 663.7,380.0 669.3,380.6" fill="none" stroke="#1f76ff" stroke-width="3" stroke-linejoin="round"/>
<path d="M752.4,359.8C756.7,358.8 770.3,355.2 778.2,353.8C786.1,352.4 792.2,352.2 800.0,351.7C807.8,351.2 816.3,350.5 825.0,350.7C833.7,350.9 842.5,351.5 852.2,352.7C862.0,353.9 874.1,355.7 883.5,358.0C892.9,360.3 900.1,362.8 908.5,366.3C916.9,369.8 925.9,374.3 933.6,378.8C941.3,383.3 948.6,388.3 954.5,393.4C960.4,398.4 964.9,403.5 969.1,409.1C973.3,414.7 977.1,421.4 979.5,426.8C981.9,432.2 982.8,435.9 983.7,441.5C984.6,447.1 984.5,453.8 984.7,460.2C984.9,466.6 984.7,476.7 984.7,480.0" fill="none" stroke="#1f76ff" stroke-width="3"/>
<path d="M711.9,385.5L718.8,504L719.4,512" stroke="#1f6fe8" stroke-width="1.9" fill="none"/>
<path d="M731.1,521.8L895,495.3" stroke="#d9222a" stroke-width="1.9" fill="none"/>
<path d="M724.7,537.6L752.4,640" stroke="#21a046" stroke-width="1.9" fill="none"/>
<path d="M698.3,359.3L704.2,357.8L717.8,357.1L721.5,374.7L721.6,383.4L703.2,386.5L700.8,379.6Z" fill="#1f6fe8"/>
<path d="M708.9,512.9L728.1,509.9L731.7,535.6L713.3,538.6Z" fill="#ffffff"/>
<path d="M891.8,483.6L908.5,481.1L913.8,491.5L913.0,507.0L896.0,509.5L893.0,497.0Z" fill="#d9222a"/>
<path d="M744.0,640.3L763.4,637.1L767.4,650.6L767.4,665.6L748.4,668.8L744.4,653.7Z" fill="#21a046"/>
</svg>
<svg class="abs" width="92" height="99" viewBox="0 0 92 99">
<rect x="0" y="0" width="91" height="98" fill="#ffffff"/>
<path d="M7,8Q7,0 14,0L51.7,0L51.7,21Q51.7,30.5 61,30.5L82,30.5L82,87Q82,93 76,93L13,93Q7,93 7,87Z" fill="#3d45c9"/>
<path d="M56.4,1.3L80.3,25.2L62.5,25.2Q56.4,25.2 56.4,19Z" fill="#3d45c9"/>
<rect x="-6" y="9.5" width="47" height="33" rx="5.5" fill="#ffffff"/>
<rect x="-6" y="13.9" width="42.5" height="23.9" rx="2.5" fill="#3d45c9"/>
<rect x="19.9" y="46.7" width="49.1" height="4.8" fill="#ffffff"/>
<rect x="19.9" y="61.5" width="49.1" height="4.6" fill="#ffffff"/>
<rect x="19.9" y="75.9" width="49.1" height="4.8" fill="#ffffff"/>
<text x="1.4" y="31.3" font-family="Liberation Sans, sans-serif" font-weight="bold" font-size="13.6" fill="#ffffff" textLength="23.8" lengthAdjust="spacingAndGlyphs">STL</text>
</svg>
<div class="panel"></div>
<svg class="abs" width="20" height="300" viewBox="0 0 20 300" style="top:0">
<path d="M10.5,261.8L0.3,275.2L10.5,288.8" fill="#ffffff" stroke="#c2c2c2" stroke-width="1"/>
<rect x="10" y="262.6" width="1.6" height="25.4" fill="#ffffff"/>
</svg>
<div class="f h" style="left:44px;top:259px"></div><div class="f h" style="left:231px;top:259px"></div>
<div class="f" style="left:44px;top:300px;height:31.3px"></div><div class="f" style="left:231px;top:300px;height:31.3px"></div>
<div class="f" style="left:44px;top:342px"></div><div class="f" style="left:231px;top:342px"></div>
<span class="t" style="left:26.5px;top:269px;color:#e0352f">X</span>
<span class="t" style="left:26.5px;top:309.6px;color:#3aa655">Y</span>
<span class="t" style="left:27px;top:350.7px;color:#2f6fe4">Z</span>
<span class="t" style="left:49.5px;top:269px;letter-spacing:0.05px">111.1279</span>
<span class="t" style="left:49.5px;top:309.6px;letter-spacing:0.05px">108.3976</span>
<span class="t" style="left:49.5px;top:350.7px;letter-spacing:0.05px">16</span>
<span class="t u" style="left:190.5px;top:269px">mm</span>
<span class="t u" style="left:190.5px;top:309.6px">mm</span>
<span class="t u" style="left:190.5px;top:350.7px">mm</span>
<span class="t" style="left:236.5px;top:269px;letter-spacing:0.05px">100</span>
<span class="t" style="left:236.5px;top:309.6px;letter-spacing:0.05px">100</span>
<span class="t" style="left:236.5px;top:350.7px;letter-spacing:0.05px">100</span>
<span class="t u" style="left:391px;top:269px">%</span>
<span class="t u" style="left:391px;top:309.6px">%</span>
<span class="t u" style="left:391px;top:350.7px">%</span>
<div class="cb" style="top:394.3px"></div>
<div class="cb" style="top:430.7px"></div>
<span class="t" style="left:153px;top:398.2px;letter-spacing:0.01px">Snap Scaling</span>
<span class="t" style="left:153px;top:435.2px">Uniform Scaling</span>
<svg class="abs" width="200" height="480" viewBox="0 0 200 480">
<path d="M66.2,416.3L75.5,416.2A9.8,9.8 0 1 1 65.7,426.6" fill="none" stroke="#0f0a3c" stroke-width="2.7" stroke-linecap="round"/>
<path d="M72.3,410.6L66.2,416.3L72.3,421.8" fill="none" stroke="#0f0a3c" stroke-width="2.7" stroke-linecap="round" stroke-linejoin="round"/>
<path d="M130.9,441.8L133.8,444.6L138.3,439.2" fill="none" stroke="#0f1430" stroke-width="2.7"/>
</svg>
<span class="t g" style="left:43px;top:681px">Object list</span>
<span class="t g" style="left:51px;top:718.2px;letter-spacing:-0.15px">STL1275</span>
<span class="t g" style="left:10px;top:752.2px;color:#555;letter-spacing:0.21px">111.1 x 108.4 x 16.0 mm</span>
<svg class="abs" width="220" height="829" viewBox="0 0 220 829">
<path d="M12.5,691.5L18,685.5L23.5,691.5" fill="none" stroke="#6b6b6b" stroke-width="1.4"/>
<path d="M16,729L27.5,717.5L30,720L18.5,731.5Z" fill="#6b6b6b"/>
<path d="M13.5,733.6L30.5,733.6" stroke="#6b6b6b" stroke-width="1.2"/>
<g fill="none" stroke="#6a6a6a" stroke-width="2.2" stroke-linejoin="round">
<path d="M26.7,789.5L37.5,795.5L37.5,808L26.7,814L16,808L16,795.5Z"/><path d="M16,795.5L26.7,801.5L37.5,795.5M26.7,801.5L26.7,814"/>
</g>
<g fill="none" stroke="#6a6a6a" stroke-width="2.2" stroke-linejoin="round">
<path d="M55.5,797L62,791L78,791L78,806L71.5,812.5L55.5,812.5Z" fill="none"/><rect x="55.5" y="797" width="16" height="15.5" fill="#6a6a6a"/><path d="M71.5,797L78,791"/>
<path d="M95.5,797L102,791L118,791L118,806L111.5,812.5L95.5,812.5Z"/><path d="M95.5,797L102,791L118,791L111.5,797Z" fill="#6a6a6a"/><path d="M111.5,797L111.5,812.5"/>
<path d="M135.5,797L142,791L158,791L158,806L151.5,812.5L135.5,812.5Z" transform="translate(293.5,0) scale(-1,1)"/><path d="M135.5,791L142,797L142,812.5L135.5,806Z" fill="#6a6a6a"/><path d="M142,797L158,797"/>
<path d="M175.5,797L182,791L198,791L198,806L191.5,812.5L175.5,812.5Z"/><path d="M191.5,797L198,791L198,806L191.5,812.5Z" fill="#6a6a6a"/><path d="M175.5,797L191.5,797"/>
</g>
</svg>

</body></html>
